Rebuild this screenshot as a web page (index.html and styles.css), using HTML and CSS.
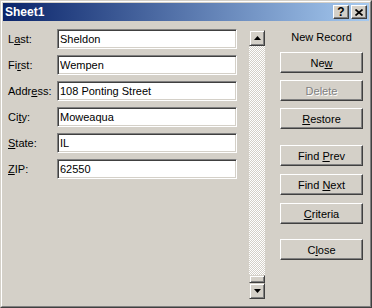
FILE: index.html
```html
<!DOCTYPE html>
<html lang="en">
<head>
    <meta charset="UTF-8">
    <title>Sheet1</title>
    <link rel="stylesheet" href="styles.css">
</head>
<body>
    <div class="window">
        <div class="frame">
            <div class="titlebar">
                <span class="title">Sheet1</span>
                <div class="title-buttons">
                    <div class="title-btn help">?</div>
                    <div class="title-btn">
                        <svg width="8" height="7" viewBox="0 0 8 7"><path d="M0.5 0.5 L7.5 6.5 M7.5 0.5 L0.5 6.5" stroke="#000" stroke-width="1.7"/></svg>
                    </div>
                </div>
            </div>

            <div class="dialog">
                <div class="fields">
                    <label>L<u>a</u>st:</label>
                    <input class="field" type="text" value="Sheldon">
                    <label>Fi<u>r</u>st:</label>
                    <input class="field" type="text" value="Wempen">
                    <label>Addr<u>e</u>ss:</label>
                    <input class="field" type="text" value="108 Ponting Street">
                    <label>Ci<u>t</u>y:</label>
                    <input class="field" type="text" value="Moweaqua">
                    <label><u>S</u>tate:</label>
                    <input class="field" type="text" value="IL">
                    <label><u>Z</u>IP:</label>
                    <input class="field" type="text" value="62550">
                </div>

                <div class="scrollbar">
                    <div class="sb-btn">
                        <svg width="7" height="4" viewBox="0 0 7 4"><path d="M3.5 0 L7 4 L0 4 Z" fill="#000"/></svg>
                    </div>
                    <div class="sb-track"></div>
                    <div class="sb-thumb"></div>
                    <div class="sb-btn">
                        <svg width="7" height="4" viewBox="0 0 7 4"><path d="M0 0 L7 0 L3.5 4 Z" fill="#000"/></svg>
                    </div>
                </div>

                <div class="actions">
                    <div class="record-label">New Record</div>
                    <button class="btn first">Ne<u>w</u></button>
                    <button class="btn disabled">Delete</button>
                    <button class="btn"><u>R</u>estore</button>
                    <button class="btn find">Find <u>P</u>rev</button>
                    <button class="btn near">Find <u>N</u>ext</button>
                    <button class="btn near"><u>C</u>riteria</button>
                    <button class="btn close">C<u>l</u>ose</button>
                </div>
            </div>
        </div>
    </div>
</body>
</html>
```

FILE: styles.css
```css
body {
    margin: 0;
    font-family: "Liberation Sans", Arial, sans-serif;
    font-size: 11px;
    color: #000;
    background-color: #d4d0c8;
}
.window {
    width: 372px;
    height: 308px;
    box-sizing: border-box;
    border: 1px solid;
    border-color: #d4d0c8 #404040 #404040 #d4d0c8;
    background-color: #d4d0c8;
}
.frame {
    height: 100%;
    box-sizing: border-box;
    border: 1px solid;
    border-color: #fff #808080 #808080 #fff;
    padding: 1px;
}
.titlebar {
    height: 18px;
    display: flex;
    align-items: center;
    justify-content: space-between;
    padding: 0 2px 0 2px;
    background: linear-gradient(to right, #0a246a, #a6caf0);
}
.title {
    color: #fff;
    font-weight: bold;
    font-size: 12px;
}
.title-buttons {
    display: flex;
    gap: 2px;
}
.title-btn {
    width: 16px;
    height: 14px;
    box-sizing: border-box;
    border: 1px solid;
    border-color: #fff #404040 #404040 #fff;
    box-shadow: inset -1px -1px #808080;
    background-color: #d4d0c8;
    display: flex;
    align-items: center;
    justify-content: center;
}
.title-btn.help {
    font-weight: bold;
    font-size: 12px;
    line-height: 12px;
}
.dialog {
    display: flex;
    margin-top: 1px;
    padding: 7px 0 0 5px;
}
.fields {
    display: grid;
    grid-template-columns: 49px 180px;
    grid-auto-rows: 20px;
    row-gap: 6px;
    align-items: center;
}
.field {
    width: 180px;
    height: 20px;
    box-sizing: border-box;
    margin: 0;
    padding: 0 2px;
    border: 1px solid;
    border-color: #808080 #fff #fff #808080;
    box-shadow: inset 1px 1px #404040, inset -1px -1px #d4d0c8;
    background-color: #fff;
    font-family: "Liberation Sans", Arial, sans-serif;
    font-size: 11px;
    color: #000;
    outline: none;
}
.scrollbar {
    width: 16px;
    height: 269px;
    margin: 1px 0 0 12px;
    display: flex;
    flex-direction: column;
}
.sb-btn,
.sb-thumb {
    box-sizing: border-box;
    border: 1px solid;
    border-color: #d4d0c8 #404040 #404040 #d4d0c8;
    box-shadow: inset 1px 1px #fff, inset -1px -1px #808080;
    background-color: #d4d0c8;
}
.sb-btn {
    height: 16px;
    display: flex;
    align-items: center;
    justify-content: center;
}
.sb-thumb {
    height: 8px;
}
.sb-track {
    flex: 1;
    background-color: #d4d0c8;
    background-image: conic-gradient(#fff 25%, #d4d0c8 0 50%, #fff 0 75%, #d4d0c8 0);
    background-size: 2px 2px;
}
.actions {
    width: 83px;
    margin: 1px 0 0 15px;
    display: flex;
    flex-direction: column;
}
.record-label {
    height: 14px;
    line-height: 14px;
    text-align: center;
}
.btn {
    height: 21px;
    margin: 7px 0 0 0;
    padding: 0;
    box-sizing: border-box;
    border: 1px solid;
    border-color: #fff #404040 #404040 #fff;
    box-shadow: inset -1px -1px #808080;
    background-color: #d4d0c8;
    font-family: "Liberation Sans", Arial, sans-serif;
    font-size: 11px;
    color: #000;
}
.btn.first {
    margin-top: 8px;
}
.btn.find {
    margin-top: 16px;
}
.btn.near {
    margin-top: 8px;
}
.btn.close {
    margin-top: 15px;
}
.btn.disabled {
    color: #808080;
    text-shadow: 1px 1px #fff;
}
```
